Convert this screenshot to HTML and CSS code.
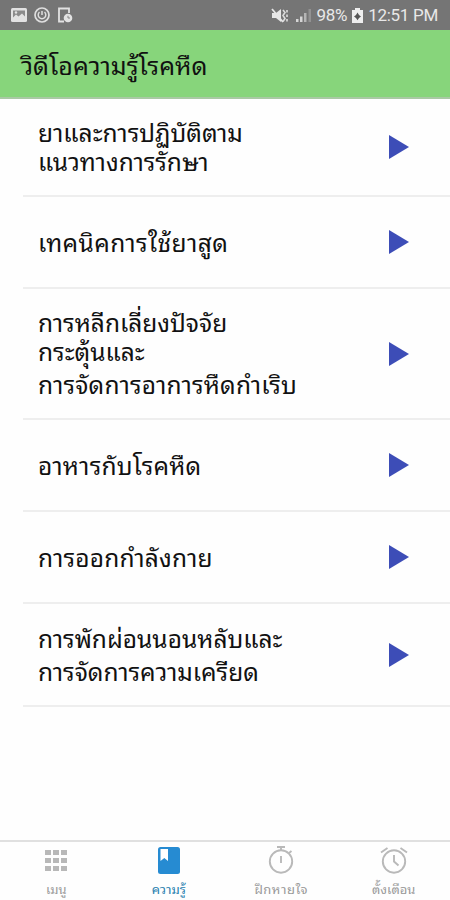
FILE: index.html
```
<!DOCTYPE html>
<html lang="th">
<head>
    <meta charset="UTF-8">
    <meta name="viewport" content="width=device-width, initial-scale=1.0">
    <title>วิดีโอความรู้โรคหืด</title>
    <link rel="stylesheet" href="styles.css">
</head>
<body>
    <div class="app">
        <!-- Status bar -->
        <div class="status-bar">
            <div class="status-left">
                <svg width="16" height="14" viewBox="0 0 16 14"><rect width="16" height="14" rx="1.500" fill="#e2e2e2"/><path d="M2 2.500h12v6l-3-3-3.500 3L5 6.500l-3 3z" fill="#8b8b8b"/><circle cx="5" cy="4.500" r="1.200" fill="#e2e2e2"/></svg>
                <svg width="16" height="16" viewBox="0 0 16 16" fill="none" stroke="#dedede"><circle cx="8" cy="8" r="7" stroke-width="1.700"/><path d="M5.500 5a3.800 3.800 0 1 0 5 0M8 4v4" stroke-width="1.500"/></svg>
                <svg width="16" height="16" viewBox="0 0 16 16"><path d="M12 6V1.500H2v13h5" fill="none" stroke="#e2e2e2" stroke-width="1.800"/><circle cx="11" cy="11" r="4.300" fill="#e2e2e2"/><path d="M11 8.800V11h2" fill="none" stroke="#858585"/></svg>
            </div>
            <div class="status-right">
                <svg width="18" height="15" viewBox="0 0 18 15"><path d="M1 5h4l5-4v13L5 10H1z" fill="#e6e6e6"/><path d="M1 1l11 13" stroke="#e6e6e6" stroke-width="1.800"/><path d="M12 2l2 2.500-2 3 2 3-2 3M16 2v2.500M16 6.500v2.500M16 11v2.500" fill="none" stroke="#dcdcdc" stroke-width="1.600"/></svg>
                <svg class="signal" width="16" height="14" viewBox="0 0 16 14"><path d="M0 11h2.500v3H0zM4 8.500h2.500V14H4z" fill="#d5d5d5"/><path d="M8 5h2.500v9H8z" fill="#b5b5b5"/><path d="M12.500 1H15v13h-2.500z" fill="#929292"/></svg>
                <span class="percent">98%</span>
                <svg class="battery" width="11" height="15" viewBox="0 0 11 15"><path d="M3 0h5v2h3v13H0V2h3z" fill="#eee"/><path d="M5.500 4.500L7 7l2 1.500L7 10l-1.500 2.200L4 10 2 8.500 4 7z" fill="#555"/></svg>
                <span class="clock">12:51 PM</span>
            </div>
        </div>

        <div class="header"><h1>วิดีโอความรู้โรคหืด</h1></div>

        <!-- Video list -->
        <div class="video-list">
            <div class="video-item item-1">
                <p>ยาและการปฏิบัติตาม<br>แนวทางการรักษา</p>
                <svg class="play" viewBox="0 0 20 24"><path d="M0 0l20 12L0 24z"/></svg>
            </div>
            <div class="video-item item-2">
                <p>เทคนิคการใช้ยาสูด</p>
                <svg class="play" viewBox="0 0 20 24"><path d="M0 0l20 12L0 24z"/></svg>
            </div>
            <div class="video-item item-3">
                <p>การหลีกเลี่ยงปัจจัย<br>กระตุ้นและ<br><span class="spaced">การจัดการอาการหืดกำเริบ</span></p>
                <svg class="play" viewBox="0 0 20 24"><path d="M0 0l20 12L0 24z"/></svg>
            </div>
            <div class="video-item item-4">
                <p>อาหารกับโรคหืด</p>
                <svg class="play" viewBox="0 0 20 24"><path d="M0 0l20 12L0 24z"/></svg>
            </div>
            <div class="video-item item-5">
                <p>การออกกำลังกาย</p>
                <svg class="play" viewBox="0 0 20 24"><path d="M0 0l20 12L0 24z"/></svg>
            </div>
            <div class="video-item item-6">
                <p>การพักผ่อนนอนหลับและ<br><span class="spaced">การจัดการความเครียด</span></p>
                <svg class="play" viewBox="0 0 20 24"><path d="M0 0l20 12L0 24z"/></svg>
            </div>
        </div>

        <!-- Bottom tabs -->
        <div class="tab-bar">
            <div class="tab">
                <svg width="28" height="28" viewBox="0 0 28 28" fill="#b8b8b8"><path d="M3 4h6v5H3zM11 4h6v5h-6zM19 4h6v5h-6zM3 12h6v5H3zM11 12h6v5h-6zM19 12h6v5h-6zM3 20h6v5H3zM11 20h6v5h-6zM19 20h6v5h-6z"/></svg>
                <span>เมนู</span>
            </div>
            <div class="tab active">
                <svg width="28" height="28" viewBox="0 0 28 28"><rect x="3" y="1" width="22" height="27" rx="2.500" fill="#268bd2"/><path d="M5.500 3h7.500v12l-3.700-3-3.800 3z" fill="#fff"/></svg>
                <span>ความรู้</span>
            </div>
            <div class="tab">
                <svg width="28" height="28" viewBox="0 0 28 28" fill="none" stroke="#b9b9b9" stroke-width="1.900"><circle cx="14" cy="15.500" r="11.200"/><path d="M10 1h8M14 1v3M22 7l2.500-2M14 10v7"/></svg>
                <span>ฝึกหายใจ</span>
            </div>
            <div class="tab">
                <svg width="28" height="28" viewBox="0 0 28 28" fill="none" stroke="#b9b9b9" stroke-width="1.900"><circle cx="14" cy="15.500" r="11.200"/><path d="M1 6.500L7.500 2M27 6.500L20.500 2M14 9v6.500l4.500 4"/></svg>
                <span>ตั้งเตือน</span>
            </div>
        </div>
    </div>
</body>
</html>
```
FILE: styles.css
```
* {
    box-sizing: border-box;
}
body {
    margin: 0;
    background: #fefefe;
    font-family: Roboto, "Noto Sans Thai Looped", Loma, "Noto Sans Thai", "Noto Sans", sans-serif;
    color: #111;
}
.app {
    width: 450px;
    height: 900px;
    display: flex;
    flex-direction: column;
    overflow: hidden;
}
.status-bar {
    height: 30px;
    flex: none;
    background: #757575;
    display: flex;
    justify-content: space-between;
    align-items: center;
    padding: 0 12px 0 11px;
    color: #e8e8e8;
}
.status-left,
.status-right {
    display: flex;
    align-items: center;
}
.status-left {
    gap: 7px;
}
.signal {
    margin-left: 7px;
}
.percent,
.clock {
    font-size: 17px;
    line-height: 30px;
    letter-spacing: -0.3px;
    white-space: nowrap;
}
.percent {
    margin-left: 5px;
}
.battery {
    margin: 0 5px;
}
.header {
    height: 69px;
    flex: none;
    background: #87d57b;
    border-bottom: 2px solid #a9c9a4;
    padding-left: 21px;
    display: flex;
    align-items: center;
}
.header h1 {
    margin: 0;
    font-size: 25px;
    font-weight: normal;
    white-space: nowrap;
}
.video-list {
    flex: 1;
    padding-left: 23px;
}
.video-item {
    height: 92px;
    border-bottom: 2px solid #eee;
    display: flex;
    align-items: center;
    justify-content: space-between;
    padding: 0 41px 0 15px;
}
.video-item p {
    margin: 2px 0 0;
    font-size: 24.5px;
    line-height: 29px;
    white-space: nowrap;
}
.video-item .spaced {
    display: inline-block;
    padding-top: 4px;
}
.item-1 {
    height: 98px;
}
.item-2 p {
    letter-spacing: 0.4px;
}
.item-3 {
    height: 131px;
}
.item-3 .spaced,
.item-4 p,
.item-5 p {
    letter-spacing: 0.2px;
}
.item-6 {
    height: 103px;
}
.play {
    width: 20px;
    height: 24px;
    flex: none;
    fill: #3d4db7;
}
.tab-bar {
    height: 60px;
    flex: none;
    border-top: 2px solid #e0e0e0;
    display: grid;
    grid-template-columns: repeat(4, 1fr);
}
.tab {
    display: flex;
    flex-direction: column;
    align-items: center;
    padding-top: 4px;
    font-size: 13px;
    line-height: 18px;
    gap: 7px;
    color: #999;
}
.tab:nth-child(3) {
    letter-spacing: 0.5px;
}
.tab.active {
    color: #287fae;
}
```
